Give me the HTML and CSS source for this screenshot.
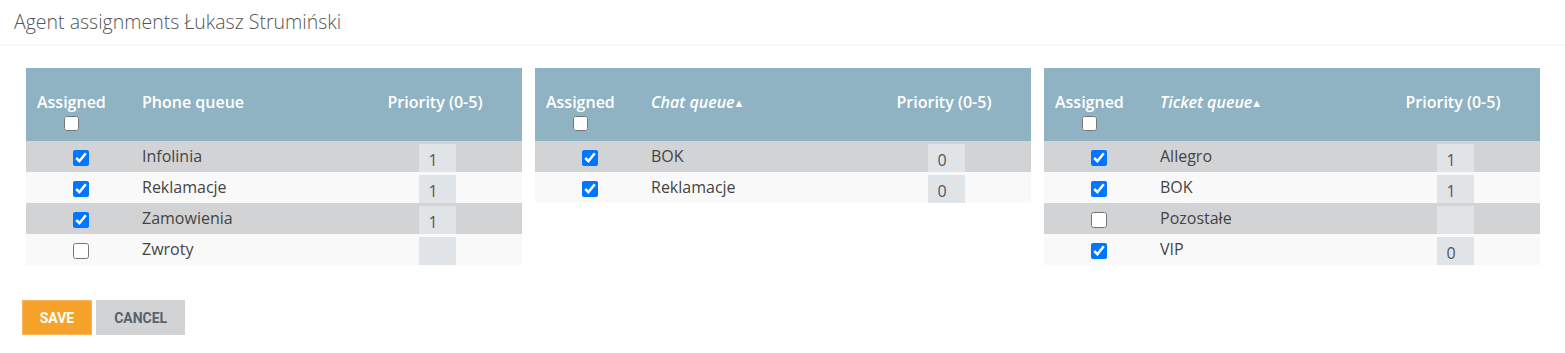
FILE: index.html
```html
<!DOCTYPE html>
<html lang="pl">
<head>
    <meta charset="UTF-8">
    <meta name="viewport" content="width=device-width, initial-scale=1.0">
    <title>Agent assignments</title>
    <link rel="stylesheet" href="styles.css">
</head>
<body>
    <h1 class="page-title">Agent assignments Łukasz Strumiński</h1>

    <div class="queues">
        <table class="queue-table">
            <colgroup><col class="col-check"><col><col class="col-prio"><col class="col-end"></colgroup>
            <thead>
                <tr>
                    <th class="th-check"><div class="check-head">Assigned<br><input type="checkbox"></div></th>
                    <th class="th-name">Phone queue</th>
                    <th class="th-prio">Priority (0-5)</th>
                    <th></th>
                </tr>
            </thead>
            <tbody>
                <tr><td class="td-check"><input type="checkbox" checked></td><td>Infolinia</td><td class="td-prio"><input type="text" value="1"></td><td></td></tr>
                <tr><td class="td-check"><input type="checkbox" checked></td><td>Reklamacje</td><td class="td-prio"><input type="text" value="1"></td><td></td></tr>
                <tr><td class="td-check"><input type="checkbox" checked></td><td>Zamowienia</td><td class="td-prio"><input type="text" value="1"></td><td></td></tr>
                <tr><td class="td-check"><input type="checkbox"></td><td>Zwroty</td><td class="td-prio"><input type="text" value=""></td><td></td></tr>
            </tbody>
        </table>

        <table class="queue-table">
            <colgroup><col class="col-check"><col><col class="col-prio"><col class="col-end"></colgroup>
            <thead>
                <tr>
                    <th class="th-check"><div class="check-head">Assigned<br><input type="checkbox"></div></th>
                    <th class="th-name sorted">Chat queue<span class="sort-arrow">&#9650;</span></th>
                    <th class="th-prio">Priority (0-5)</th>
                    <th></th>
                </tr>
            </thead>
            <tbody>
                <tr><td class="td-check"><input type="checkbox" checked></td><td>BOK</td><td class="td-prio"><input type="text" value="0"></td><td></td></tr>
                <tr><td class="td-check"><input type="checkbox" checked></td><td>Reklamacje</td><td class="td-prio"><input type="text" value="0"></td><td></td></tr>
            </tbody>
        </table>

        <table class="queue-table">
            <colgroup><col class="col-check"><col><col class="col-prio"><col class="col-end"></colgroup>
            <thead>
                <tr>
                    <th class="th-check"><div class="check-head">Assigned<br><input type="checkbox"></div></th>
                    <th class="th-name sorted">Ticket queue<span class="sort-arrow">&#9650;</span></th>
                    <th class="th-prio">Priority (0-5)</th>
                    <th></th>
                </tr>
            </thead>
            <tbody>
                <tr><td class="td-check"><input type="checkbox" checked></td><td>Allegro</td><td class="td-prio"><input type="text" value="1"></td><td></td></tr>
                <tr><td class="td-check"><input type="checkbox" checked></td><td>BOK</td><td class="td-prio"><input type="text" value="1"></td><td></td></tr>
                <tr><td class="td-check"><input type="checkbox"></td><td>Pozostałe</td><td class="td-prio"><input type="text" value=""></td><td></td></tr>
                <tr><td class="td-check"><input type="checkbox" checked></td><td>VIP</td><td class="td-prio"><input type="text" value="0"></td><td></td></tr>
            </tbody>
        </table>
    </div>

    <div class="actions">
        <button class="btn btn-save">SAVE</button>
        <button class="btn btn-cancel">CANCEL</button>
    </div>
</body>
</html>
```

FILE: styles.css
```css
body {
    font-family: "Open Sans", sans-serif;
    background-color: #ffffff;
    color: #444444;
    margin: 0;
    padding: 0;
}

.page-title {
    margin: 0;
    padding: 9px 14px 0 14px;
    height: 35px;
    font-size: 19.5px;
    line-height: 26px;
    font-weight: 300;
    color: #555555;
    border-bottom: 2px solid #f8f8f8;
}

.queues {
    display: grid;
    grid-template-columns: repeat(3, 1fr);
    align-items: start;
    column-gap: 13px;
    padding: 22px 25px 0 26px;
}

.queue-table {
    width: 100%;
    border-collapse: collapse;
    table-layout: fixed;
    font-size: 16px;
}

.col-check {
    width: 110px;
}

.col-prio {
    width: 118px;
}

.col-end {
    width: 28px;
}

.queue-table thead tr {
    background-color: #8fb3c2;
    height: 73px;
}

.queue-table th {
    color: #ffffff;
    font-weight: 600;
    font-size: 16px;
    vertical-align: top;
    padding: 24px 0 0 0;
    line-height: 20px;
    white-space: nowrap;
}

.th-check {
    text-align: left;
    padding-left: 11px !important;
}

.check-head {
    display: inline-block;
    text-align: center;
}

.check-head input {
    width: 15px;
    height: 15px;
    margin: 4px 0 0 0;
}

.th-name {
    text-align: left;
    padding-left: 6px !important;
}

.sorted {
    font-style: italic;
}

.sort-arrow {
    font-size: 11px;
    font-style: normal;
    margin-left: -1px;
    vertical-align: 1px;
}

.th-prio {
    text-align: center;
}

.queue-table tbody tr {
    height: 31px;
}

.queue-table tbody tr:nth-child(odd) {
    background-color: #d2d3d5;
}

.queue-table tbody tr:nth-child(even) {
    background-color: #f9f9f9;
}

.queue-table td {
    padding: 0 0 1px 6px;
    color: #444444;
    vertical-align: middle;
}

.td-check {
    text-align: center;
    padding: 0 !important;
}

.td-check input {
    width: 16px;
    height: 16px;
    margin: 0;
    vertical-align: middle;
}

.td-prio {
    text-align: center;
    vertical-align: bottom !important;
    padding: 0 0 0 4px !important;
}

.td-prio input {
    width: 37px;
    height: 28px;
    box-sizing: border-box;
    border: none;
    background-color: #e1e4e6;
    color: #555555;
    font-family: "Open Sans", sans-serif;
    font-size: 16px;
    padding: 4px 0 0 10px;
    margin: 0 auto;
    display: block;
}

.actions {
    padding: 35px 0 0 22px;
}

.btn {
    font-family: Roboto, sans-serif;
    font-weight: 700;
    font-size: 14px;
    height: 35px;
    border: none;
    cursor: pointer;
    margin: 0;
}

.btn-save {
    background-color: #f6a22b;
    border: 1px solid #f8b55a;
    color: #ffffff;
    width: 70px;
}

.btn-cancel {
    background-color: #d2d3d5;
    color: #56646e;
    width: 89px;
}
```
